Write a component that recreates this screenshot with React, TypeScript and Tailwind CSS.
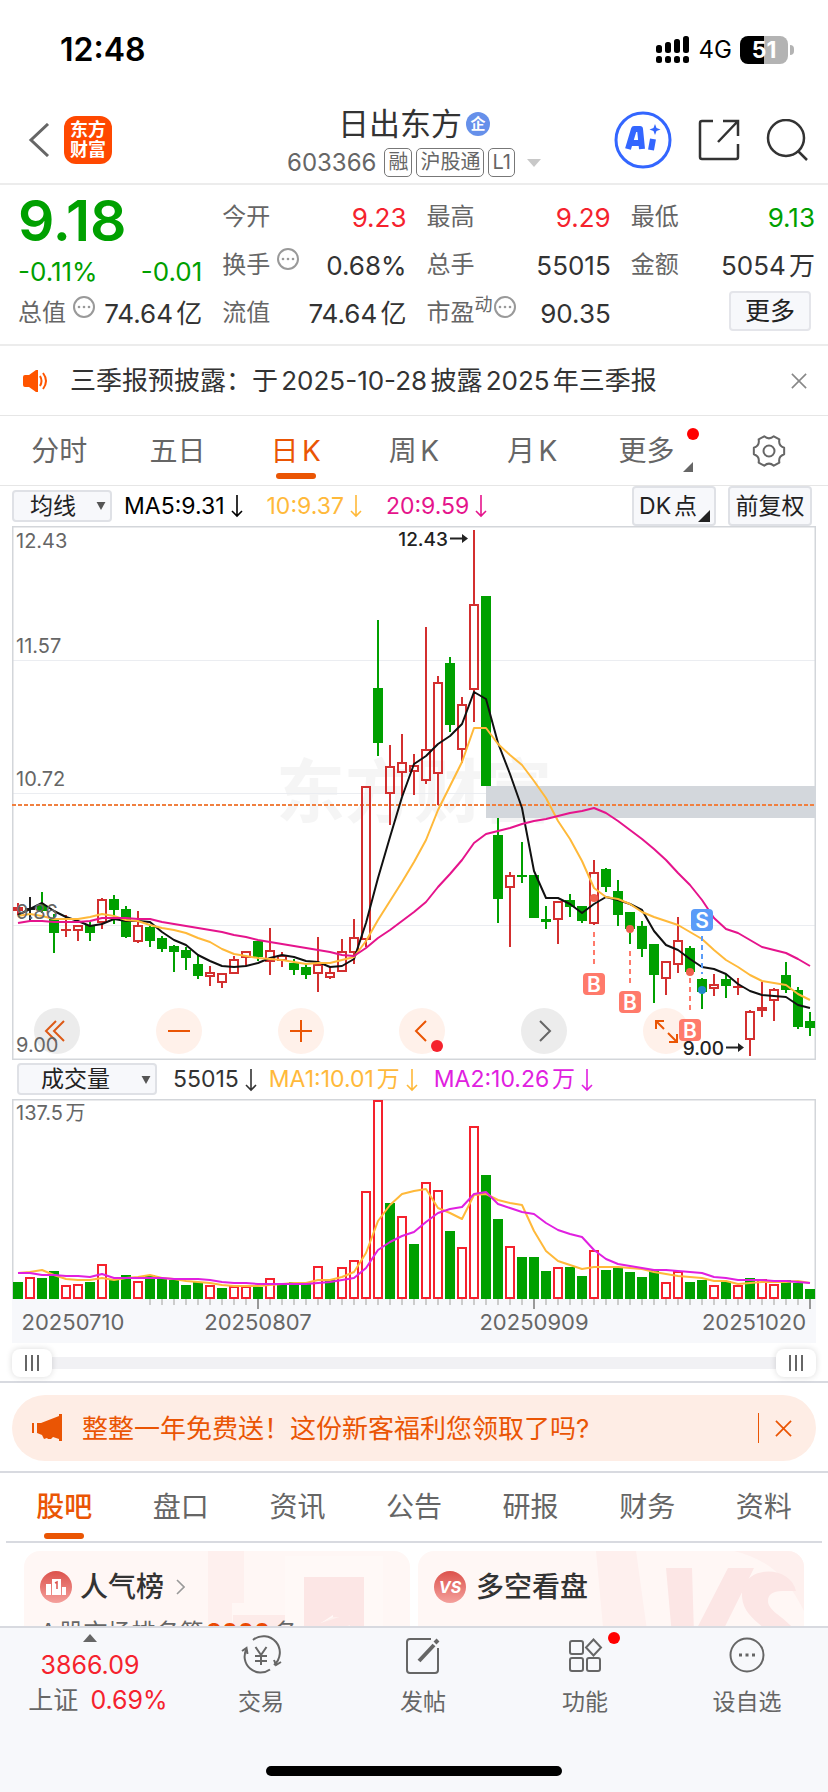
import type { ReactNode } from "react";

type Kind = "r" | "g" | "k";
// body top, body bottom, high, low
type Candle = [Kind, number, number, number, number];

const STEP = 12;
const cx = (i: number) => 6 + STEP * i;
const line = (ys: number[]) => ys.map((y, i) => `${cx(i)},${y}`).join(" ");

const CANDLES: Candle[] = [
  ["r", 381, 385, 377, 389], ["k", 383, 383, 371, 395], ["g", 379, 385, 366, 387], ["g", 393, 407, 388, 427],
  ["r", 404, 404, 389, 411], ["r", 399, 405, 399, 415], ["g", 399, 407, 396, 415], ["r", 373, 397, 372, 403],
  ["g", 373, 384, 369, 398], ["g", 383, 411, 380, 412], ["r", 399, 416, 385, 417], ["g", 401, 415, 399, 421],
  ["g", 412, 423, 410, 426], ["g", 420, 426, 419, 446], ["g", 424, 432, 421, 444], ["g", 438, 450, 429, 453],
  ["r", 446, 451, 440, 460], ["r", 447, 457, 447, 462], ["r", 433, 448, 430, 448], ["r", 425, 432, 425, 440],
  ["g", 415, 431, 415, 435], ["r", 424, 436, 402, 449], ["r", 429, 435, 426, 441], ["g", 437, 444, 433, 449],
  ["g", 441, 449, 438, 453], ["r", 438, 448, 411, 466], ["r", 446, 452, 441, 453], ["r", 425, 446, 413, 446],
  ["r", 411, 427, 393, 438], ["r", 260, 414, 260, 421], ["g", 162, 217, 94, 230], ["r", 240, 268, 219, 299],
  ["r", 236, 247, 208, 270], ["r", 239, 246, 228, 269], ["r", 223, 255, 101, 258], ["r", 156, 248, 150, 279],
  ["g", 137, 199, 131, 206], ["r", 178, 224, 171, 237], ["r", 78, 164, 4, 196], ["g", 70, 260, 70, 260],
  ["g", 309, 373, 292, 397], ["r", 349, 362, 346, 421], ["g", 350, 350, 316, 357], ["g", 349, 392, 349, 392],
  ["g", 393, 396, 380, 403], ["r", 375, 394, 375, 418], ["g", 374, 381, 368, 391], ["g", 380, 395, 380, 397],
  ["r", 346, 398, 334, 399], ["g", 343, 361, 342, 366], ["g", 365, 389, 354, 400], ["g", 386, 403, 386, 418],
  ["g", 400, 423, 395, 431], ["g", 418, 449, 418, 477], ["r", 435, 453, 435, 469], ["r", 414, 439, 391, 447],
  ["g", 422, 446, 420, 448], ["g", 453, 466, 452, 483], ["r", 458, 463, 448, 470], ["g", 453, 460, 448, 472],
  ["r", 460, 462, 452, 469], ["r", 485, 514, 484, 530], ["r", 481, 485, 456, 491], ["r", 463, 475, 462, 495],
  ["g", 449, 464, 436, 467], ["g", 464, 501, 461, 503], ["g", 495, 502, 486, 510],
];

const MA5 = [
  389, 383, 377, 385, 391, 395, 400, 398, 393, 395, 395, 396, 406, 414, 419, 429, 435, 440, 441, 440, 437, 432,
  429, 431, 435, 436, 441, 440, 433, 397, 352, 311, 271, 238, 230, 218, 210, 198, 166, 173, 217, 248, 282, 345,
  372, 372, 378, 387, 378, 371, 374, 378, 384, 405, 419, 424, 433, 441, 443, 448, 458, 465, 469, 470, 471, 479, 482,
];
const MA10 = [
  390, 388, 390, 393, 393, 393, 391, 388, 390, 394, 395, 399, 402, 404, 407, 412, 416, 423, 428, 430, 432, 433,
  434, 436, 438, 437, 437, 434, 431, 415, 394, 375, 356, 336, 314, 284, 260, 236, 202, 202, 218, 229, 239, 255,
  272, 295, 313, 335, 362, 371, 373, 378, 386, 391, 395, 399, 406, 413, 424, 434, 441, 449, 455, 457, 459, 468, 474,
];
const MA20 = [
  397, 395, 395, 396, 396, 396, 395, 392, 392, 392, 393, 393, 396, 398, 400, 402, 404, 406, 409, 411, 414, 416,
  418, 420, 422, 424, 426, 429, 430, 422, 412, 404, 395, 386, 376, 361, 348, 334, 317, 308, 305, 302, 298, 295,
  293, 290, 287, 285, 282, 287, 295, 304, 313, 323, 334, 347, 359, 374, 392, 403, 407, 414, 421, 424, 427, 433, 440,
];

const VOL_KINDS = "grggrrgrggrggggg" + "rgrrgrgggrgrrrrg" + "rgrrgrrggrgggrgg" + "rgggggrrggrgrgrrggg";
const VOL_TOPS = [
  183, 178, 179, 172, 186, 185, 183, 165, 180, 176, 182, 176, 180, 181, 186, 183, 186, 189, 187, 187, 188, 179,
  186, 183, 185, 167, 180, 168, 161, 92, 1, 104, 117, 145, 83, 91, 132, 148, 27, 76, 120, 147, 158, 158, 172,
  168, 168, 177, 151, 171, 168, 173, 178, 171, 183, 172, 183, 181, 186, 182, 186, 179, 180, 185, 181, 184, 190,
];
const VMA1 = [
  174, 173, 171, 176, 180, 181, 181, 179, 181, 179, 178, 176, 179, 180, 182, 183, 184, 186, 187, 187, 187, 186,
  185, 184, 184, 181, 181, 178, 173, 154, 122, 106, 95, 92, 90, 109, 114, 120, 96, 95, 101, 104, 106, 132, 152,
  162, 166, 170, 168, 168, 168, 169, 170, 173, 175, 177, 178, 179, 182, 182, 185, 184, 183, 183, 183, 182, 184,
];
const VMA2 = [
  174, 174, 176, 176, 177, 177, 178, 175, 179, 179, 179, 179, 179, 180, 180, 180, 181, 183, 184, 184, 185, 185,
  185, 185, 185, 184, 183, 181, 179, 169, 151, 143, 137, 133, 123, 114, 110, 108, 95, 93, 105, 109, 113, 115, 124,
  131, 135, 138, 151, 160, 165, 167, 169, 171, 171, 172, 173, 174, 178, 179, 181, 181, 181, 182, 182, 183, 184,
];

const RED = "#d32f2f";
const GREEN = "#00a000";

function DotsIcon({ tight }: { tight?: boolean }) {
  return (
    <svg viewBox="0 0 24 24" className={tight ? "-mt-3 h-6 w-6 shrink-0" : "-mt-3 ml-1.5 h-6 w-6 shrink-0"} fill="#999">
      <circle cx="12" cy="12" r="10" fill="none" stroke="#999" strokeWidth="2" />
      <circle cx="7" cy="12" r="1.3" />
      <circle cx="12" cy="12" r="1.3" />
      <circle cx="17" cy="12" r="1.3" />
    </svg>
  );
}

function DownArrow() {
  return (
    <svg viewBox="0 0 12 24" className="ml-1.5 h-6 w-3 shrink-0" fill="none" stroke="currentColor" strokeWidth="1.6">
      <path d="M6 1v21M1 17l5 5 5-5" />
    </svg>
  );
}

function Close({ className }: { className: string }) {
  return (
    <svg viewBox="0 0 18 18" className={className} fill="none" stroke="currentColor" strokeWidth="1.8">
      <path d="M1 1l16 16M17 1L1 17" />
    </svg>
  );
}

function StatusBar() {
  return (
    <div className="flex h-[100px] shrink-0 items-center justify-between pl-[60px] pr-[34px] text-black">
      <span className="text-[32px] font-semibold">12:48</span>
      <div className="flex items-center gap-2">
        <svg viewBox="0 0 36 28" className="h-7 w-9">
          {[0, 1, 2, 3].map((n) => (
            <g key={n}>
              <rect x={1 + n * 9} y={9 - n * 3} width="6" height={8 + n * 3} rx="2.5" />
              <rect x={1 + n * 9} y="20" width="6" height="7" rx="2.5" />
            </g>
          ))}
        </svg>
        <span className="text-2xl">4G</span>
        <div className="flex items-center gap-0.5">
          <span className="flex h-7 w-12 items-center justify-center rounded-lg bg-[linear-gradient(90deg,#000_50%,#b3b3b3_50%)] text-[23px] font-bold text-white">
            51
          </span>
          <span className="h-2.5 w-1 rounded-r-full bg-[#b3b3b3]" />
        </div>
      </div>
    </div>
  );
}

function Tag({ children }: { children: ReactNode }) {
  return <span className="rounded-[5px] border border-[#777] px-[3px] text-xl leading-[27px]">{children}</span>;
}

function Header() {
  return (
    <header className="grid h-[85px] shrink-0 grid-cols-[1fr_auto_1fr] items-center border-b-2 border-[#ececec] px-5">
      <div className="flex items-center gap-[14px] pb-1 pl-2">
        <button aria-label="返回">
          <svg viewBox="0 0 22 34" className="h-[34px] w-[22px]" fill="none" stroke="#666" strokeWidth="3">
            <path d="M20 1L3 17l17 16" />
          </svg>
        </button>
        <a href="#home" className="flex h-12 w-12 items-center justify-center rounded-xl bg-[#ff4800] text-center text-[18px] font-bold leading-5 text-white">
          东方
          <br />
          财富
        </a>
      </div>
      <div className="flex flex-col items-center">
        <h1 className="flex items-center gap-1 text-[31px] leading-[42px] text-[#333]">
          日出东方
          <span className="flex h-6 w-6 items-center justify-center rounded-full bg-[#6690ea] text-[15px] font-bold text-white">企</span>
        </h1>
        <div className="flex items-center gap-1 text-[#666]">
          <span className="mr-1 text-2xl leading-9">603366</span>
          <Tag>融</Tag>
          <Tag>沪股通</Tag>
          <Tag>L1</Tag>
          <svg viewBox="0 0 14 8" className="ml-2 h-2 w-3.5" fill="#c8c8c8">
            <path d="M0 0h14L7 8z" />
          </svg>
        </div>
      </div>
      <div className="flex items-center justify-end gap-[26px] pb-1">
        <button aria-label="AI">
          <svg viewBox="0 0 58 58" className="h-[58px] w-[58px]" fill="none">
            <circle cx="29" cy="29" r="27" stroke="#3366ff" strokeWidth="3" />
            <path d="M14 38l6-20h6l2 20M17 32h10M39 28l-2 11" stroke="#3366ff" strokeWidth="6" strokeLinejoin="round" />
            <path d="M41 13l1.500 4 4 1.500-4 1.500-1.500 4-1.500-4-4-1.500 4-1.500z" fill="#3366ff" />
          </svg>
        </button>
        <button aria-label="分享">
          <svg viewBox="0 0 42 42" className="h-[42px] w-[42px]" fill="none" stroke="#333" strokeWidth="2.5">
            <path d="M15 2H4a2 2 0 0 0-2 2v34a2 2 0 0 0 2 2h34a2 2 0 0 0 2-2V25M25 2h15v15M40 2L20 23" />
          </svg>
        </button>
        <button aria-label="搜索">
          <svg viewBox="0 0 42 42" className="h-[42px] w-[42px]" fill="none" stroke="#333" strokeWidth="2.5">
            <circle cx="20" cy="19" r="18" />
            <path d="M32 32l9 9" />
          </svg>
        </button>
      </div>
    </header>
  );
}

function Stat({ label, value, tone = "text-[#333]", dots, sup }: { label: string; value: string; tone?: string; dots?: boolean; sup?: string }) {
  return (
    <div className="flex h-12 items-center justify-between">
      <dt className="flex items-center text-2xl text-[#666]">
        {label}
        {sup && <span className="-mt-4 text-[18px]">{sup}</span>}
        {dots && <DotsIcon tight={!!sup} />}
      </dt>
      <dd className={tone}>{value}</dd>
    </div>
  );
}

function Quote() {
  return (
    <section className="grid h-[161px] shrink-0 grid-cols-4 gap-x-5 border-b-2 border-[#ececec] pl-[18px] pr-[13px] pt-2 text-[26px] whitespace-nowrap">
      <div>
        <div className="h-[56px] text-[57px] font-semibold leading-[56px] text-[#00a000]">9.18</div>
        <div className="flex h-10 items-center justify-between pt-1 text-[#00a000]">
          <span>-0.11%</span>
          <span>-0.01</span>
        </div>
        <dl><Stat label="总值" value="74.64亿" dots /></dl>
      </div>
      <dl>
        <Stat label="今开" value="9.23" tone="text-[#f5222d]" />
        <Stat label="换手" value="0.68%" dots />
        <Stat label="流值" value="74.64亿" />
      </dl>
      <dl>
        <Stat label="最高" value="9.29" tone="text-[#f5222d]" />
        <Stat label="总手" value="55015" />
        <Stat label="市盈" value="90.35" sup="动" dots />
      </dl>
      <div>
        <dl>
          <Stat label="最低" value="9.13" tone="text-[#00a000]" />
          <Stat label="金额" value="5054万" />
        </dl>
        <div className="flex h-12 items-center justify-end pb-1 pr-1">
          <button className="h-10 w-[82px] rounded border-2 border-[#e4e5ea] bg-[#f7f8fb] text-[25px] leading-8 text-[#222]">更多</button>
        </div>
      </div>
    </section>
  );
}

function Notice() {
  return (
    <section className="flex h-[70px] shrink-0 items-center border-b border-[#e6e6e6] pl-[22px] pr-[21px]">
      <svg viewBox="0 0 28 24" className="h-6 w-7 shrink-0">
        <path d="M3 6h4l7-5h2v22h-2l-7-5H3q-2 0-2-2V8q0-2 2-2z" fill="#ff5500" />
        <path d="M18 7q3 5 0 10M21 4q6 8 0 16" fill="none" stroke="#ff5500" strokeWidth="2" />
      </svg>
      <p className="ml-5 flex-1 text-[26px] text-[#333]">三季报预披露：于2025-10-28披露2025年三季报</p>
      <button aria-label="关闭" className="text-[#888]"><Close className="h-4 w-4" /></button>
    </section>
  );
}

// six rounded lobes around the centre
const GEAR = (() => {
  const pt = (deg: number, r: number) => {
    const a = (deg * Math.PI) / 180;
    return `${(17 + r * Math.cos(a)).toFixed(2)} ${(17 + r * Math.sin(a)).toFixed(2)}`;
  };
  let d = `M${pt(-12, 15.5)}`;
  for (let a = 0; a < 360; a += 60) d += `L${pt(a + 12, 15.5)}Q${pt(a + 30, 10.5)} ${pt(a + 48, 15.5)}`;
  return d + "Z";
})();

function PeriodTabs() {
  const tabs = ["分时", "五日", "日K", "周K", "月K"];
  return (
    <nav className="grid h-[70px] shrink-0 grid-cols-7 border-b border-[#e6e6e6] text-[28px] text-[#666]">
      {tabs.map((t) => (
        <button key={t} className={t === "日K" ? "relative text-[#ea5504]" : "relative"}>
          {t}
          {t === "日K" && <span className="absolute bottom-1.5 left-1/2 h-1.5 w-10 -translate-x-1/2 rounded-sm bg-[#ea5504]" />}
        </button>
      ))}
      <button className="flex items-center justify-center pr-2">
        <span className="relative">
          更多
          <span className="absolute -right-6 -top-0.5 h-3 w-3 rounded-full bg-[#ff0000]" />
          <svg viewBox="0 0 8 8" className="absolute -right-[18px] bottom-0 h-2.5 w-2.5" fill="#666"><path d="M8 0v8H0z" /></svg>
        </span>
      </button>
      <button aria-label="设置" className="flex items-center justify-center">
        <svg viewBox="0 0 34 34" className="h-[34px] w-[34px]" fill="none" stroke="#666" strokeWidth="2" strokeLinejoin="round">
          <path d={GEAR} />
          <circle cx="17" cy="17" r="5.500" />
        </svg>
      </button>
    </nav>
  );
}

function Caret() {
  return (
    <svg viewBox="0 0 10 9" className="pointer-events-none absolute right-1.5 top-1/2 h-2 w-2.5 -translate-y-1/2" fill="#555">
      <path d="M0 0h10L5 9z" />
    </svg>
  );
}

function MaBar() {
  return (
    <div className="flex h-10 shrink-0 items-center pl-3 pr-4 text-[23px]">
      <div className="relative">
        <select aria-label="主图指标" className="h-8 w-[100px] appearance-none rounded border-2 border-[#dfe1e6] bg-[#f7f8fb] pl-4 leading-7 text-[#222]">
          <option>均线</option>
        </select>
        <Caret />
      </div>
      <span className="ml-3 flex items-center text-black">MA5:9.31<DownArrow /></span>
      <span className="ml-6 flex items-center text-[#ffb93a]">10:9.37<DownArrow /></span>
      <span className="ml-6 flex items-center text-[#e5148c]">20:9.59<DownArrow /></span>
      <button className="relative ml-auto h-10 w-[84px] rounded border-2 border-[#dfe1e6] bg-[#f7f8fb] pr-3 text-[#222]">
        DK点
        <svg viewBox="0 0 12 12" className="absolute bottom-0.5 right-1 h-3 w-3" fill="#222"><path d="M12 0v12H0z" /></svg>
      </button>
      <button className="ml-3 h-10 w-[84px] rounded border-2 border-[#dfe1e6] bg-[#f7f8fb] text-[#222]">前复权</button>
    </div>
  );
}

function Signal({ x, y, dot, from, to, kind }: { x: number; y: number; dot: number; from: number; to: number; kind: "B" | "S" }) {
  const color = kind === "B" ? "#ff7a6b" : "#5a9cf8";
  return (
    <g>
      <circle cx={x} cy={dot} r="4" fill={kind === "B" ? "#f0604d" : "#1e88c8"} />
      <path d={`M${x} ${from}V${to}`} stroke={color} strokeWidth="2" strokeDasharray="5 4" />
      <rect x={x - 11} y={y - 11} width="22" height="22" rx="4" fill={color} />
      <text x={x} y={y + 8} textAnchor="middle" fontSize="21" fontWeight="600" fill="#fff">{kind}</text>
    </g>
  );
}

const CONTROLS = [
  { label: "最左", tone: "bg-[#ececec] text-[#dd5a17]", d: "M22 13L12 23l10 10M30 13L20 23l10 10" },
  { label: "缩小", tone: "bg-[#fff1ea] text-[#ea5504]", d: "M12 23h22" },
  { label: "放大", tone: "bg-[#fff1ea] text-[#ea5504]", d: "M12 23h22M23 12v22" },
  { label: "向左", tone: "bg-[#fff1ea] text-[#ea5504]", d: "M27 13L17 23l10 10" },
  { label: "向右", tone: "bg-[#ececec] text-[#666]", d: "M19 13l10 10-10 10" },
  { label: "全屏", tone: "bg-[#fff1ea] text-[#ea5504]", d: "M13 21v-8h8M13 13l8 8M34 26v8h-8M34 34l-9-9" },
];

function PriceChart() {
  return (
    <div className="relative mx-3">
      <div className="absolute bottom-1.5 left-[22px] right-[127px] flex justify-between">
        {CONTROLS.map(({ label, tone, d }) => (
          <button key={label} aria-label={label} className={`relative h-[46px] w-[46px] rounded-full ${tone}`}>
            <svg viewBox="0 0 46 46" className="h-full w-full" fill="none" stroke="currentColor" strokeWidth="2"><path d={d} /></svg>
            {label === "向左" && <span className="absolute bottom-0.5 right-0.5 h-3 w-3 rounded-full bg-[#f5222d]" />}
          </button>
        ))}
      </div>
      <svg viewBox="0 0 804 534" className="pointer-events-none relative block w-full">
        <text x="264" y="291" fontSize="69" fontWeight="700" fill="#000" opacity="0.035">东方财富</text>
        <g stroke="#ebedf1" strokeWidth="1">
          <path d="M0 134.500H804M0 267.500H804M0 399.500H804" />
        </g>
        <rect x="0" y="0" width="804" height="534" fill="none" stroke="#d3d6da" strokeWidth="3" />
        <rect x="474" y="260" width="330" height="32" fill="#d3d7dc" />
        <path d="M0 279H804" stroke="#f08040" strokeWidth="2" strokeDasharray="4 2" />
        {CANDLES.map(([k, top, bottom, high, low], i) => {
          const color = k === "r" ? RED : k === "g" ? GREEN : "#222";
          return (
            <g key={i} stroke={color} strokeWidth="2" fill={k === "r" ? "none" : color}>
              {bottom - top < 3 ? (
                <path d={`M${cx(i) - 5} ${(top + bottom) / 2}h10M${cx(i)} ${high}V${low}`} />
              ) : k === "r" ? (
                <>
                  <path d={`M${cx(i)} ${high}V${top}M${cx(i)} ${bottom}V${low}`} />
                  <rect x={cx(i) - 4} y={top + 1} width="8" height={bottom - top - 2} />
                </>
              ) : (
                <>
                  <path d={`M${cx(i)} ${high}V${low}`} />
                  <rect x={cx(i) - 5} y={top} width="10" height={bottom - top} stroke="none" />
                </>
              )}
            </g>
          );
        })}
        <g fill="none" strokeWidth="2" strokeLinejoin="round">
          <polyline points={line(MA5)} stroke="#111" />
          <polyline points={line(MA10)} stroke="#ffb93a" />
          <polyline points={line(MA20)} stroke="#e5148c" />
        </g>
        <g fontSize="20" fill="#666">
          <text x="4" y="22">12.43</text>
          <text x="4" y="127">11.57</text>
          <text x="4" y="260">10.72</text>
          <text x="4" y="393">9.86</text>
          <text x="4" y="526">9.00</text>
        </g>
        <Signal kind="B" x={582} y={458} dot={372} from={406} to={442} />
        <Signal kind="B" x={618} y={476} dot={403} from={425} to={460} />
        <Signal kind="B" x={678} y={504} dot={446} from={452} to={488} />
        <Signal kind="S" x={690} y={394} dot={464} from={410} to={448} />
        <g fontSize="19" fontWeight="500" fill="#222" stroke="none">
          <text x="436" y="20" textAnchor="end">12.43</text>
          <text x="712" y="529" textAnchor="end">9.00</text>
          <path d="M438 11.500h12v-3.500l6 4.500-6 4.500v-3.500h-12zM714 520.500h12v-3.500l6 4.500-6 4.500v-3.500h-12z" />
        </g>
      </svg>
    </div>
  );
}

function VolumeBar() {
  return (
    <div className="flex h-[39px] shrink-0 items-center pl-[17px] text-[23px]">
      <div className="relative">
        <select aria-label="副图指标" className="h-8 w-[140px] appearance-none rounded border-2 border-[#dfe1e6] bg-[#f7f8fb] pl-[22px] leading-7 text-[#222]">
          <option>成交量</option>
        </select>
        <Caret />
      </div>
      <span className="ml-4 flex items-center text-[#333]">55015<DownArrow /></span>
      <span className="ml-3 flex items-center text-[#ffb93a]">MA1:10.01万<DownArrow /></span>
      <span className="ml-4 flex items-center text-[#e020e0]">MA2:10.26万<DownArrow /></span>
    </div>
  );
}

function VolumeChart() {
  const dates: [number, string][] = [[61, "20250710"], [246, "20250807"], [522, "20250909"], [742, "20251020"]];
  return (
    <svg viewBox="0 0 804 244" className="mx-3 block shrink-0">
      <rect x="0" y="200" width="804" height="44" fill="#f7f8fb" />
      <path d="M0 200V0H804V200" fill="none" stroke="#d3d6da" strokeWidth="3" />
      {VOL_TOPS.map((top, i) =>
        VOL_KINDS[i] === "r" ? (
          <rect key={i} x={cx(i) - 4} y={top + 1} width="8" height={198 - top} fill="#fff" stroke="#f5222d" strokeWidth="2" />
        ) : (
          <rect key={i} x={cx(i) - 5} y={top} width="10" height={200 - top} fill={GREEN} />
        ),
      )}
      <g fill="none" strokeWidth="2" strokeLinejoin="round">
        <polyline points={line(VMA1)} stroke="#ffb93a" />
        <polyline points={line(VMA2)} stroke="#e020e0" />
      </g>
      {VOL_TOPS.map((_, i) => {
        if (i < 11) return null;
        const major = i === 20 || i === 43 || i === 66;
        return <path key={i} d={`M${cx(i)} 200v${major ? 10 : 6}`} stroke={major ? "#999" : "#ccc"} strokeWidth="2" />;
      })}
      <text x="4" y="21" fontSize="20" fill="#666">137.5万</text>
      {dates.map(([x, d]) => (
        <text key={d} x={x} y="231" fontSize="22" textAnchor="middle" fill="#666">{d}</text>
      ))}
    </svg>
  );
}

const RANGE =
  "pointer-events-none absolute inset-0 w-full appearance-none bg-transparent [&::-webkit-slider-thumb]:pointer-events-auto [&::-webkit-slider-thumb]:h-7 [&::-webkit-slider-thumb]:w-10 [&::-webkit-slider-thumb]:appearance-none [&::-webkit-slider-thumb]:rounded-lg [&::-webkit-slider-thumb]:bg-white [&::-webkit-slider-thumb]:bg-[linear-gradient(90deg,#666_0_2px,#fff_2px_6px,#666_6px_8px,#fff_8px_12px,#666_12px_14px)] [&::-webkit-slider-thumb]:bg-[length:14px_16px] [&::-webkit-slider-thumb]:bg-center [&::-webkit-slider-thumb]:bg-no-repeat [&::-webkit-slider-thumb]:shadow-[0_0_6px_rgba(0,0,0,0.15)]";

function RangeSlider() {
  return (
    <div className="h-10 shrink-0 border-b-2 border-[#d8dae0] px-3 pt-1">
      <div className="relative flex h-8 items-center">
        <div className="h-3 w-full bg-[#f1f1f4]" />
        <input type="range" aria-label="起始日期" defaultValue={0} className={RANGE} />
        <input type="range" aria-label="结束日期" defaultValue={100} className={RANGE} />
      </div>
    </div>
  );
}

function Promo() {
  return (
    <section className="shrink-0 border-b-2 border-[#d8dae0] px-3 pb-[10px] pt-3">
      <div className="flex h-[66px] items-center rounded-full bg-[#feede5] pl-5 pr-6 text-[#ea5504]">
        <svg viewBox="0 0 32 28" className="h-7 w-8 shrink-0" fill="#ea5504">
          <path d="M0 9h2v10H0zM5 9l4 0L27 2V0h3v27h-3v-2l-6-2-2 2-3 0-1-1-3 1-2-4-5-2z" />
        </svg>
        <p className="ml-[18px] flex-1 text-[26px]">整整一年免费送！这份新客福利您领取了吗?</p>
        <span className="mr-4 h-[30px] w-px bg-[#ea5504]" />
        <button aria-label="关闭"><Close className="h-[17px] w-[17px]" /></button>
      </div>
    </section>
  );
}

function InfoTabs() {
  return (
    <nav className="mx-1.5 grid h-[70px] shrink-0 grid-cols-7 border-b-2 border-[#d8dae0] text-[28px] text-[#666]">
      {["股吧", "盘口", "资讯", "公告", "研报", "财务", "资料"].map((t, i) => (
        <button key={t} className={i === 0 ? "relative font-medium text-[#ea5504]" : "relative"}>
          {t}
          {i === 0 && <span className="absolute bottom-0.5 left-1/2 h-1.5 w-10 -translate-x-1/2 rounded-sm bg-[#ea5504]" />}
        </button>
      ))}
    </nav>
  );
}

function Cards() {
  const card = "relative h-[130px] flex-1 overflow-hidden rounded-2xl bg-[#fff7f5] px-4 pt-[18px]";
  const icon = "h-8 w-8 shrink-0";
  return (
    <section className="flex shrink-0 gap-2 px-6 pb-6 pt-2">
      <div className={card}>
        <svg viewBox="0 0 220 130" className="absolute right-0 top-0 h-[130px]">
          <path d="M18 0h36v52H42v78H18z" fill="#fef0ee" />
          <path d="M95 5h98v125H95z" fill="#fff9f7" />
          <path d="M114 26h60v104h-31V64l-12 8v58h-17z" fill="#fce6e5" />
          <path d="M131 72l12-6h31v64h-43z" fill="#fef0ee" />
          <path d="M131 72l43-14v72h-14V74l-29 10z" fill="#fce6e5" />
          <path d="M43 64h52v66H43z" fill="#fdebe9" />
        </svg>
        <h2 className="relative flex items-center text-[28px] font-medium leading-9 text-[#333]">
          <svg viewBox="0 0 32 32" className={icon}>
            <defs>
              <linearGradient id="badge" x2="0" y2="1">
                <stop stopColor="#dc524c" />
                <stop offset="1" stopColor="#f4a09c" />
              </linearGradient>
            </defs>
            <circle cx="16" cy="16" r="16" fill="url(#badge)" />
            <path d="M6 13h5v11H6zM12 8h9v16h-9zM22 16h4v8h-4z" fill="#fff" />
            <path d="M15 12l2-1v7" fill="none" stroke="#dc524c" strokeWidth="1.500" />
          </svg>
          <span className="ml-2">人气榜</span>
          <svg viewBox="0 0 9 16" className="ml-3 h-4 w-[9px]" fill="none" stroke="#999" strokeWidth="1.600"><path d="M1 1l7 7-7 7" /></svg>
        </h2>
        <p className="relative mt-3 whitespace-nowrap text-2xl text-[#666]">
          A股市场排名第<b className="text-[#ea4a04]">2000</b>名
        </p>
      </div>
      <div className={card}>
        <svg viewBox="0 0 220 130" className="absolute right-0 top-0 h-[130px]">
          <path d="M12 0h40l18 130H24z" fill="#fef0ee" />
          <path d="M150 0h70v60C200 20 180 8 150 0z" fill="#fef0ee" />
          <path d="M82 17h26l2 66 34-66h26l-56 113H92z" fill="#fce6e5" />
          <path d="M212 40C206 12 156 14 158 46c2 26 34 30 32 50-2 12-16 14-32 10l-8 24c36 6 66-6 66-34 0-26-32-32-32-46 0-12 14-10 28-10z" fill="#fce6e5" />
        </svg>
        <h2 className="relative flex items-center text-[28px] font-medium leading-9 text-[#333]">
          <svg viewBox="0 0 32 32" className={icon}>
            <circle cx="16" cy="16" r="16" fill="url(#badge)" />
            <text x="16" y="22" textAnchor="middle" fontSize="16" fontWeight="700" fontStyle="italic" fill="#fff">VS</text>
          </svg>
          <span className="ml-2.5">多空看盘</span>
        </h2>
      </div>
    </section>
  );
}

const NAV: { label: string; icon: ReactNode; badge?: boolean }[] = [
  {
    label: "交易",
    icon: (
      <>
        <path d="M11 4a16 16 0 0 1 21 25M28 33.500A16 16 0 0 1 4.500 13M0 15l4.500-3 1 6M39 26l-5 3-2-5" />
        <path d="M13.500 11l5.500 8 5.500-8M19 19v10M13 20h12M13 25h12" />
      </>
    ),
  },
  { label: "发帖", icon: <><path d="M27 3H6a3 3 0 0 0-3 3v28a3 3 0 0 0 3 3h25a3 3 0 0 0 3-3V12" /><path d="M15 25L30 9" strokeWidth="4" /><path d="M31 7l3-3" strokeWidth="4" /></> },
  {
    label: "功能",
    badge: true,
    icon: (
      <>
        <rect x="4" y="5" width="13" height="13" rx="2" />
        <rect x="4" y="22" width="13" height="13" rx="2" />
        <rect x="21" y="22" width="13" height="13" rx="2" />
        <path d="M27.500 3.500l7.500 8-7.500 8-7.500-8z" />
      </>
    ),
  },
  {
    label: "设自选",
    icon: (
      <>
        <circle cx="19" cy="19" r="16.500" />
        <path d="M11 19h3M17.500 19h3M24 19h3" strokeWidth="3" />
      </>
    ),
  },
];

function BottomBar() {
  return (
    <footer className="flex h-[166px] shrink-0 flex-col justify-between border-t-2 border-[#d8dae0] bg-[#f7f8fb] pb-4">
      <nav className="flex text-[#666]">
        <a href="#index" className="flex w-[180px] flex-col items-center pt-1.5 text-[25px] leading-[35px]">
          <svg viewBox="0 0 14 8" className="h-2 w-3.5" fill="#666"><path d="M0 8h14L7 0z" /></svg>
          <span className="pt-1.5 text-[#f5222d]">3866.09</span>
          <span className="flex gap-3 pl-4">上证<span className="text-[#f5222d]">0.69%</span></span>
        </a>
        {NAV.map(({ label, icon, badge }) => (
          <a key={label} href={`#${label}`} className="flex flex-1 flex-col items-center pt-2 text-[23px] leading-8">
            <span className="relative">
              <svg viewBox="0 0 38 38" className="h-[38px] w-[38px] overflow-visible" fill="none" stroke="#666" strokeWidth="2">{icon}</svg>
              {badge && <span className="absolute -right-4 -top-1 h-3 w-3 rounded-full bg-[#ff0000]" />}
            </span>
            <span className="mt-3">{label}</span>
          </a>
        ))}
      </nav>
      <div className="mx-auto h-2.5 w-[296px] rounded-full bg-black" />
    </footer>
  );
}

export default function App() {
  return (
    <div className="flex h-screen flex-col bg-white font-['Inter','Noto_Sans_CJK_SC',sans-serif] [text-autospace:normal]">
      <StatusBar />
      <Header />
      <main className="flex min-h-0 flex-1 flex-col overflow-y-auto [scrollbar-width:none]">
        <Quote />
        <Notice />
        <PeriodTabs />
        <MaBar />
        <PriceChart />
        <VolumeBar />
        <VolumeChart />
        <RangeSlider />
        <Promo />
        <InfoTabs />
        <Cards />
      </main>
      <BottomBar />
    </div>
  );
}
